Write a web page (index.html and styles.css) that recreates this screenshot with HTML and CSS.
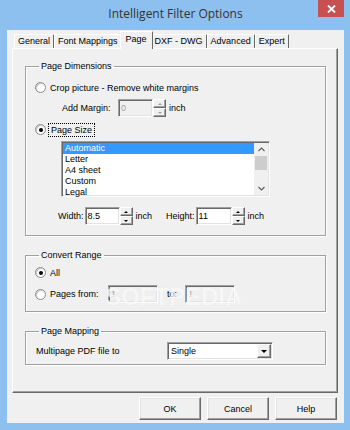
FILE: index.html
```html
<!doctype html>
<html lang="en">

<head>
    <meta charset="utf-8" />
    <meta name="viewport" content="width=device-width, initial-scale=1">
    <link rel="stylesheet" href="styles.css">
</head>

<body>
    <div class="window">
        <div class="titlebar">
            <span class="title">Intelligent Filter Options</span>
            <button class="close" aria-label="Close">
                <svg width="9" height="8" viewBox="0 0 9 8">
                    <path d="M1 0.5 L8 7.5 M8 0.5 L1 7.5" stroke="#fff" stroke-width="1.8" />
                </svg>
            </button>
        </div>
        <div class="client">
            <div class="tabs">
                <span class="tab">General</span>
                <span class="tab">Font Mappings</span>
                <span class="tab active">Page</span>
                <span class="tab">DXF - DWG</span>
                <span class="tab">Advanced</span>
                <span class="tab">Expert</span>
            </div>
            <div class="panel">
                <fieldset class="group dims">
                    <legend>Page Dimensions</legend>
                    <label class="radio">
                        <span class="dot"></span>
                        Crop picture - Remove white margins
                    </label>
                    <div class="row margin-row">
                        <span class="lbl">Add Margin:</span>
                        <span class="spin disabled">
                            <span class="field">0</span>
                            <span class="arrows"><span class="up"></span><span class="down"></span></span>
                        </span>
                        <span class="unit">inch</span>
                    </div>
                    <label class="radio checked">
                        <span class="dot"></span>
                        <span class="focus">Page Size</span>
                    </label>
                    <div class="listbox">
                        <div class="list">
                            <div class="item selected">Automatic</div>
                            <div class="item">Letter</div>
                            <div class="item">A4 sheet</div>
                            <div class="item">Custom</div>
                            <div class="item">Legal</div>
                        </div>
                        <div class="scrollbar">
                            <svg class="chev" width="7" height="5" viewBox="0 0 7 5">
                                <polyline points="0.5,4 3.5,1 6.5,4" fill="none" stroke="#606060" stroke-width="1.2" />
                            </svg>
                            <span class="thumb"></span>
                            <span class="track"></span>
                            <svg class="chev" width="7" height="5" viewBox="0 0 7 5">
                                <polyline points="0.5,1 3.5,4 6.5,1" fill="none" stroke="#606060" stroke-width="1.2" />
                            </svg>
                        </div>
                    </div>
                    <div class="row size-row">
                        <span class="lbl">Width:</span>
                        <span class="spin">
                            <span class="field">8.5</span>
                            <span class="arrows"><span class="up"></span><span class="down"></span></span>
                        </span>
                        <span class="unit">inch</span>
                        <span class="lbl height-lbl">Height:</span>
                        <span class="spin">
                            <span class="field">11</span>
                            <span class="arrows"><span class="up"></span><span class="down"></span></span>
                        </span>
                        <span class="unit">inch</span>
                    </div>
                </fieldset>

                <fieldset class="group range">
                    <legend>Convert Range</legend>
                    <label class="radio checked">
                        <span class="dot"></span>
                        All
                    </label>
                    <div class="row pages-row">
                        <label class="radio">
                            <span class="dot"></span>
                            Pages from:
                        </label>
                        <span class="edit disabled">1</span>
                        <span class="to">to:</span>
                        <span class="edit disabled">1</span>
                    </div>
                </fieldset>

                <fieldset class="group mapping">
                    <legend>Page Mapping</legend>
                    <div class="row">
                        <span class="lbl map-lbl">Multipage PDF file to</span>
                        <span class="combo">
                            <span class="combo-text">Single</span>
                            <span class="combo-btn"></span>
                        </span>
                    </div>
                </fieldset>

                <span class="watermark">SOFTPEDIA<sup>®</sup></span>
            </div>
            <div class="buttons">
                <button class="btn">OK</button>
                <button class="btn">Cancel</button>
                <button class="btn">Help</button>
            </div>
        </div>
    </div>
</body>

</html>
```

FILE: styles.css
```css
html {
    font-family: "Liberation Sans", Arial, sans-serif;
    font-size: 9px;
    color: #000;
}

body {
    margin: 0;
    width: 350px;
    height: 430px;
    overflow: hidden;
    background: #8dc0ef;
}

.window {
    display: flex;
    flex-direction: column;
    height: 430px;
    box-sizing: border-box;
    padding: 0 6px 7px 7px;
}

/* title bar */

.titlebar {
    height: 30px;
    flex: none;
    display: grid;
    grid-template-columns: 1fr auto 1fr;
}

.title {
    grid-column: 2;
    align-self: center;
    margin-top: -4px;
    font-family: "Open Sans", sans-serif;
    font-size: 12px;
    color: #333;
}

.close {
    grid-column: 3;
    justify-self: end;
    align-self: start;
    width: 26px;
    height: 17px;
    padding: 0;
    border: 0;
    background: #c75050;
    display: flex;
    align-items: center;
    justify-content: center;
}

/* client area */

.client {
    flex: 1;
    display: flex;
    flex-direction: column;
    background: #f0f0f0;
    padding: 1px 6px 0 5px;
}

.tabs {
    display: flex;
    align-items: flex-end;
    height: 17px;
    padding-left: 2px;
    position: relative;
    z-index: 1;
}

.tab {
    height: 14px;
    box-sizing: border-box;
    padding: 0 3px;
    line-height: 13px;
    border-top: 1px solid #fff;
    border-left: 1px solid #fff;
    border-right: 1px solid #696969;
    border-top-left-radius: 1px;
    border-top-right-radius: 1px;
    white-space: nowrap;
}

.tab.active {
    height: 18px;
    margin: 0 -2px -1px -2px;
    padding: 0 5px;
    line-height: 15px;
    background: #f0f0f0;
    position: relative;
    z-index: 2;
}

.panel {
    height: 345px;
    flex: none;
    box-sizing: border-box;
    position: relative;
    display: flex;
    flex-direction: column;
    gap: 14px;
    padding: 12px 11px 0 12px;
    border-top: 1px solid #fff;
    border-left: 1px solid #fff;
    border-right: 1px solid #696969;
    border-bottom: 1px solid #696969;
    box-shadow: inset -1px -1px 0 #a0a0a0;
}

/* group boxes */

.group {
    margin: 0;
    padding: 0 10px 0 9px;
    border: 1px solid #a0a0a0;
    box-shadow: 1px 1px 0 #fff, inset 1px 1px 0 #fff;
    display: flex;
    flex-direction: column;
    align-items: flex-start;
}

.group legend {
    padding: 0 2px;
    margin-left: 4px;
    line-height: 11px;
}

.dims {
    padding-bottom: 10px;
}

.range {
    padding-bottom: 8px;
}

.mapping {
    padding-bottom: 4px;
}

.row {
    display: flex;
    align-items: center;
    height: 18px;
}

.radio {
    display: flex;
    align-items: center;
    gap: 4px;
    height: 13px;
    white-space: nowrap;
}

.dims > .radio:first-of-type {
    margin-top: 9px;
}

.dot {
    width: 9px;
    height: 9px;
    border: 1px solid #8a8a8a;
    border-radius: 50%;
    background: #fff;
    box-shadow: inset 1px 1px 1px #c8c8c8;
    display: flex;
    align-items: center;
    justify-content: center;
}

.checked .dot::after {
    content: "";
    width: 4px;
    height: 4px;
    border-radius: 50%;
    background: #000;
}

.focus {
    outline: 1px dotted #000;
    outline-offset: 1px;
    padding: 0 1px;
}

.margin-row {
    margin-top: 5px;
    margin-left: 27px;
}

.margin-row .lbl {
    width: 56px;
}

.dims > .radio.checked {
    margin-top: 6px;
}

.unit {
    margin-left: 3px;
}

/* spin edits */

.spin {
    display: flex;
    height: 18px;
}

.field,
.edit {
    width: 35px;
    box-sizing: border-box;
    padding: 2px 2px 0;
    background: #fff;
    border-top: 1px solid #a0a0a0;
    border-left: 1px solid #a0a0a0;
    border-bottom: 1px solid #fff;
    border-right: 1px solid #fff;
    box-shadow: inset 1px 1px 0 #696969, inset -1px -1px 0 #e3e3e3;
    line-height: 13px;
}

.disabled .field,
.edit.disabled {
    background: #f0f0f0;
    color: #a0a0a0;
}

.arrows {
    display: flex;
    flex-direction: column;
    width: 13px;
}

.arrows span {
    flex: 1;
    box-sizing: border-box;
    border-top: 1px solid #fff;
    border-left: 1px solid #fff;
    border-right: 1px solid #696969;
    border-bottom: 1px solid #696969;
    box-shadow: inset -1px -1px 0 #a0a0a0;
    display: flex;
    align-items: center;
    justify-content: center;
}

.arrows span::after {
    content: "";
    border-left: 2px solid transparent;
    border-right: 2px solid transparent;
}

.arrows .up::after {
    border-bottom: 2px solid #000;
}

.arrows .down::after {
    border-top: 2px solid #000;
}

.disabled .arrows .up::after {
    border-bottom-color: #a0a0a0;
}

.disabled .arrows .down::after {
    border-top-color: #a0a0a0;
}

/* list box */

.listbox {
    margin-top: 5px;
    margin-left: 26px;
    width: 209px;
    height: 56px;
    box-sizing: border-box;
    display: flex;
    background: #fff;
    border-top: 1px solid #a0a0a0;
    border-left: 1px solid #a0a0a0;
    border-bottom: 1px solid #fff;
    border-right: 1px solid #fff;
    box-shadow: inset 1px 1px 0 #696969, inset -1px -1px 0 #e3e3e3;
    padding: 1px 1px 1px 1px;
}

.list {
    flex: 1;
}

.item {
    line-height: 11px;
    padding-left: 2px;
}

.item.selected {
    background: #3399ff;
    color: #fff;
}

.scrollbar {
    width: 14px;
    background: #f0f0f0;
    display: flex;
    flex-direction: column;
    align-items: center;
}

.chev {
    margin: 4px 0;
}

.thumb {
    width: 12px;
    height: 14px;
    background: #cdcdcd;
}

.track {
    flex: 1;
}

.size-row {
    margin-top: 10px;
    margin-left: 23px;
}

.size-row .lbl {
    margin-right: 1px;
}

.height-lbl {
    margin-left: 14px;
}

.height-lbl + .spin .field {
    width: 36px;
}

/* convert range */

.range > .radio {
    margin-top: 5px;
}

.pages-row {
    margin-top: 6px;
}

.pages-row .radio {
    width: 73px;
}

.edit {
    width: 50px;
    height: 18px;
}

.to {
    margin: 0 8px 0 9px;
}

/* page mapping */

.mapping .row {
    margin-top: 5px;
}

.map-lbl {
    width: 131px;
    padding-left: 1px;
}

.combo {
    display: flex;
    width: 106px;
    height: 18px;
    box-sizing: border-box;
    background: #fff;
    border-top: 1px solid #a0a0a0;
    border-left: 1px solid #a0a0a0;
    border-bottom: 1px solid #fff;
    border-right: 1px solid #fff;
    box-shadow: inset 1px 1px 0 #696969, inset -1px -1px 0 #e3e3e3;
    padding: 1px;
}

.combo-text {
    flex: 1;
    padding-left: 2px;
    line-height: 14px;
}

.combo-btn {
    width: 14px;
    box-sizing: border-box;
    background: #f0f0f0;
    border-top: 1px solid #fff;
    border-left: 1px solid #fff;
    border-right: 1px solid #696969;
    border-bottom: 1px solid #696969;
    box-shadow: inset -1px -1px 0 #a0a0a0;
    display: flex;
    align-items: center;
    justify-content: center;
}

.combo-btn::after {
    content: "";
    border-left: 3px solid transparent;
    border-right: 3px solid transparent;
    border-top: 3px solid #000;
}

/* watermark */

.watermark {
    position: absolute;
    left: 92px;
    top: 234px;
    font-size: 24px;
    font-weight: bold;
    color: rgba(255, 255, 255, 0.75);
    text-shadow: 0 0 1px rgba(0, 0, 0, 0.08);
    letter-spacing: 0;
}

.watermark sup {
    font-size: 7px;
}

/* dialog buttons */

.buttons {
    display: flex;
    justify-content: flex-end;
    gap: 6px;
    margin-top: 4px;
    padding-right: 1px;
}

.btn {
    width: 62px;
    height: 23px;
    font: inherit;
    color: #000;
    background: #f0f0f0;
    border-top: 1px solid #fff;
    border-left: 1px solid #fff;
    border-right: 1px solid #696969;
    border-bottom: 1px solid #696969;
    box-shadow: inset -1px -1px 0 #a0a0a0, inset 1px 1px 0 #e3e3e3;
    padding: 0;
}
```
